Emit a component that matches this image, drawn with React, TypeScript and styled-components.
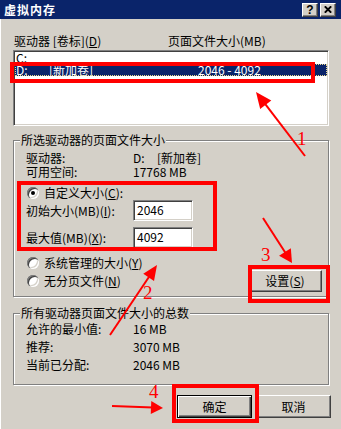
import React from "react";
import styled, { createGlobalStyle, css } from "styled-components";

const FONT = `"Noto Sans CJK SC", "Liberation Sans", sans-serif`;

const GlobalStyle = createGlobalStyle`
  html, body { margin: 0; padding: 0; background: #d4d0c8; }
  body { font-family: ${FONT}; font-size: 12px; }
  * { box-sizing: border-box; }
`;

const Window = styled.div`
  position: relative;
  width: 341px;
  height: 429px;
  background: #d4d0c8;
  box-shadow: inset 1px 0 #ffffff;
  overflow: hidden;
  font-family: ${FONT};
  font-size: 12px;
  line-height: 12px;
  color: #000;
`;

const TitleBar = styled.div`
  height: 19px;
  background: #0a246a;
  display: flex;
  align-items: center;
  justify-content: space-between;
  padding: 0 5px 0 4px;
`;

const Title = styled.span`
  color: #fff;
  font-weight: bold;
  font-size: 12px;
  letter-spacing: 1px;
`;

const TitleButtons = styled.div`
  display: flex;
  gap: 2px;
`;

const TitleButton = styled.div`
  width: 16px;
  height: 14px;
  background: #d4d0c8;
  border: 1px solid;
  border-color: #fff #404040 #404040 #fff;
  box-shadow: inset -1px -1px #808080;
  display: flex;
  align-items: center;
  justify-content: center;
  font-family: "Liberation Sans", sans-serif;
  font-weight: bold;
  font-size: 12px;
  line-height: 12px;
`;

const Body = styled.div`
  padding: 16px 10px 0 13px;
  display: flex;
  flex-direction: column;
`;

const ListHeader = styled.div`
  display: grid;
  grid-template-columns: 154px 1fr;
  padding-left: 1px;
  height: 12px;
`;

const ListBox = styled.div`
  margin-top: 3px;
  margin-right: 2px;
  height: 76px;
  background: #fff;
  border: 1px solid;
  border-color: #808080 #fff #fff #808080;
  box-shadow: inset 1px 1px #404040, inset -1px -1px #d4d0c8;
  padding: 1px;
`;

const ListRow = styled.div<{ $selected?: boolean }>`
  height: 12px;
  display: grid;
  grid-template-columns: 33px 149px auto;
  padding-left: 1px;
  white-space: nowrap;
  ${(p) =>
    p.$selected &&
    css`
      background: #0a246a;
      color: #fff;
      outline: 1px dotted #e8d890;
      outline-offset: -1px;
    `}
`;

const GroupBox = styled.div<{ $top: number; $pad: string }>`
  position: relative;
  margin-top: ${(p) => p.$top}px;
  margin-right: 2px;
  border: 1px solid #808080;
  box-shadow: inset 1px 1px #fff, 1px 1px #fff;
  padding: ${(p) => p.$pad};
  display: flex;
  flex-direction: column;
`;

const Legend = styled.span`
  position: absolute;
  top: -7px;
  left: 6px;
  padding: 0 1px;
  background: #d4d0c8;
  line-height: 12px;
`;

const InfoRow = styled.div<{ $gap?: number }>`
  display: grid;
  grid-template-columns: 107px 1fr;
  height: 12px;
  margin-top: ${(p) => p.$gap ?? 0}px;
  white-space: nowrap;
`;

const DriveValue = styled.span`
  display: flex;
`;

const DriveLetter = styled.span`
  width: 24px;
`;

const RadioRow = styled.div<{ $gap?: number }>`
  display: flex;
  align-items: center;
  height: 12px;
  margin-top: ${(p) => p.$gap ?? 0}px;
  padding-left: 1px;
  gap: 5px;
  white-space: nowrap;
`;

const RadioCircle = styled.span<{ $checked?: boolean }>`
  position: relative;
  flex: none;
  width: 12px;
  height: 12px;
  border-radius: 50%;
  background: #fff;
  box-shadow: inset 1px 1px #808080, inset 2px 2px #404040,
    inset -1px -1px #ffffff, inset -2px -2px #d4d0c8;
  ${(p) =>
    p.$checked &&
    css`
      &::after {
        content: "";
        position: absolute;
        left: 4px;
        top: 4px;
        width: 4px;
        height: 4px;
        border-radius: 50%;
        background: #000;
      }
    `}
`;

const FieldRow = styled.div<{ $gap?: number }>`
  display: grid;
  grid-template-columns: 107px 60px;
  align-items: center;
  height: 21px;
  margin-top: ${(p) => p.$gap ?? 0}px;
  white-space: nowrap;
`;

const TextField = styled.div`
  height: 21px;
  background: #fff;
  border: 1px solid;
  border-color: #808080 #fff #fff #808080;
  box-shadow: inset 1px 1px #404040, inset -1px -1px #d4d0c8;
  padding: 0 3px;
  display: flex;
  align-items: center;
  padding-bottom: 2px;
`;

const BottomSection = styled.div`
  margin-top: 9px;
  display: flex;
  justify-content: space-between;
  align-items: flex-end;
`;

const RadioColumn = styled.div`
  display: flex;
  flex-direction: column;
  padding-bottom: 5px;
`;

const PushButton = styled.div<{ $w: number; $h: number; $default?: boolean }>`
  width: ${(p) => p.$w}px;
  height: ${(p) => p.$h}px;
  background: #d4d0c8;
  display: flex;
  align-items: center;
  justify-content: center;
  white-space: nowrap;
  ${(p) =>
    p.$default
      ? css`
          border: 1px solid #000;
          box-shadow: inset 1px 1px #fff, inset -1px -1px #404040,
            inset -2px -2px #808080;
        `
      : css`
          border: 1px solid;
          border-color: #fff #404040 #404040 #fff;
          box-shadow: inset -1px -1px #808080;
        `}
`;

const ButtonRow = styled.div`
  margin-top: 10px;
  display: flex;
  justify-content: flex-end;
  gap: 4px;
`;

const Overlay = styled.svg`
  position: absolute;
  left: 0;
  top: 0;
  pointer-events: none;
`;

const RedBox = styled.div<{ $x: number; $y: number; $w: number; $h: number }>`
  position: absolute;
  left: ${(p) => p.$x}px;
  top: ${(p) => p.$y}px;
  width: ${(p) => p.$w}px;
  height: ${(p) => p.$h}px;
  border: 4px solid #ff0000;
  pointer-events: none;
`;

const StepNumber = styled.span<{ $x: number; $y: number }>`
  position: absolute;
  left: ${(p) => p.$x}px;
  top: ${(p) => p.$y}px;
  font-family: "Liberation Serif", serif;
  font-size: 19px;
  line-height: 19px;
  color: #ff0000;
`;

type Arrow = { x1: number; y1: number; x2: number; y2: number; len: number; half: number };

const arrows: Arrow[] = [
  { x1: 305, y1: 156, x2: 256, y2: 92, len: 16, half: 7 },
  { x1: 110, y1: 335, x2: 157, y2: 265, len: 15, half: 6.5 },
  { x1: 263, y1: 218, x2: 292, y2: 263, len: 13, half: 7 },
  { x1: 112, y1: 406, x2: 163, y2: 408, len: 12, half: 6.5 },
];

function arrowParts(a: Arrow) {
  const dx = a.x2 - a.x1;
  const dy = a.y2 - a.y1;
  const l = Math.hypot(dx, dy);
  const ux = dx / l;
  const uy = dy / l;
  const bx = a.x2 - ux * a.len;
  const by = a.y2 - uy * a.len;
  const px = -uy * a.half;
  const py = ux * a.half;
  return {
    line: `M${a.x1} ${a.y1} L${bx + ux * 2} ${by + uy * 2}`,
    head: `${a.x2},${a.y2} ${bx + px},${by + py} ${bx - px},${by - py}`,
  };
}

export default function App() {
  return (
    <>
      <GlobalStyle />
      <Window>
        <TitleBar>
          <Title>虚拟内存</Title>
          <TitleButtons>
            <TitleButton>?</TitleButton>
            <TitleButton>
              <svg width="8" height="7" viewBox="0 0 8 7">
                <path d="M0.8 0.3 L7.2 6.7 M7.2 0.3 L0.8 6.7" stroke="#000" strokeWidth="1.9" />
              </svg>
            </TitleButton>
          </TitleButtons>
        </TitleBar>
        <Body>
          <ListHeader>
            <span>
              驱动器 [卷标](<u>D</u>)
            </span>
            <span>页面文件大小(MB)</span>
          </ListHeader>
          <ListBox>
            <ListRow>
              <span>C:</span>
            </ListRow>
            <ListRow $selected>
              <span>D:</span>
              <span>[新加卷]</span>
              <span>2046 - 4092</span>
            </ListRow>
          </ListBox>

          <GroupBox $top={14} $pad="11px 6px 4px 12px">
            <Legend>所选驱动器的页面文件大小</Legend>
            <InfoRow>
              <span>驱动器:</span>
              <DriveValue>
                <DriveLetter>D:</DriveLetter>
                <span>[新加卷]</span>
              </DriveValue>
            </InfoRow>
            <InfoRow $gap={2}>
              <span>可用空间:</span>
              <span>17768 MB</span>
            </InfoRow>
            <RadioRow $gap={9}>
              <RadioCircle $checked />
              <span>
                自定义大小(<u>C</u>):
              </span>
            </RadioRow>
            <FieldRow $gap={1}>
              <span>
                初始大小(MB)(<u>I</u>):
              </span>
              <TextField>2046</TextField>
            </FieldRow>
            <FieldRow $gap={6}>
              <span>
                最大值(MB)(<u>X</u>):
              </span>
              <TextField>4092</TextField>
            </FieldRow>
            <BottomSection>
              <RadioColumn>
                <RadioRow>
                  <RadioCircle />
                  <span>
                    系统管理的大小(<u>Y</u>)
                  </span>
                </RadioRow>
                <RadioRow $gap={6}>
                  <RadioCircle />
                  <span>
                    无分页文件(<u>N</u>)
                  </span>
                </RadioRow>
              </RadioColumn>
              <PushButton $w={74} $h={22}>
                设置(<u>S</u>)
              </PushButton>
            </BottomSection>
          </GroupBox>

          <GroupBox $top={16} $pad="9px 6px 13px 12px">
            <Legend>所有驱动器页面文件大小的总数</Legend>
            <InfoRow>
              <span>允许的最小值:</span>
              <span>16 MB</span>
            </InfoRow>
            <InfoRow $gap={6}>
              <span>推荐:</span>
              <span>3070 MB</span>
            </InfoRow>
            <InfoRow $gap={6}>
              <span>当前已分配:</span>
              <span>2046 MB</span>
            </InfoRow>
          </GroupBox>

          <ButtonRow>
            <PushButton $w={75} $h={23} $default>
              确定
            </PushButton>
            <PushButton $w={75} $h={23}>
              取消
            </PushButton>
          </ButtonRow>
        </Body>

        <RedBox $x={10} $y={62} $w={305} $h={21} />
        <RedBox $x={17} $y={181} $w={200} $h={70} />
        <RedBox $x={248} $y={265} $w={82} $h={38} />
        <RedBox $x={172} $y={384} $w={87} $h={39} />

        <Overlay width={341} height={429} viewBox="0 0 341 429">
          {arrows.map((a, i) => {
            const p = arrowParts(a);
            return (
              <g key={i}>
                <path d={p.line} stroke="#ff0000" strokeWidth={2} fill="none" />
                <polygon points={p.head} fill="#ff0000" />
              </g>
            );
          })}
        </Overlay>

        <StepNumber $x={297} $y={129}>1</StepNumber>
        <StepNumber $x={143} $y={283}>2</StepNumber>
        <StepNumber $x={261} $y={245}>3</StepNumber>
        <StepNumber $x={149} $y={382}>4</StepNumber>
      </Window>
    </>
  );
}
